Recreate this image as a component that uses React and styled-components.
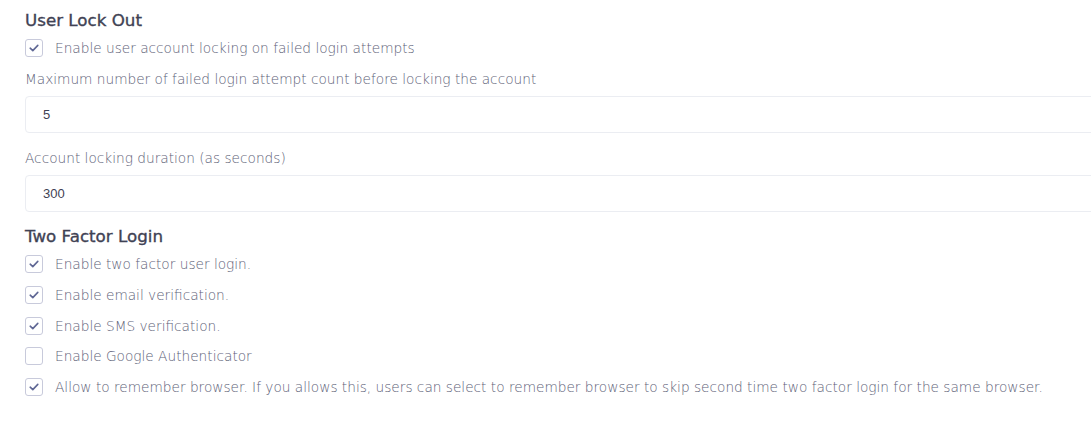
import styled, { createGlobalStyle } from "styled-components";

const GlobalStyle = createGlobalStyle`
  html, body {
    margin: 0;
    padding: 0;
    background: #ffffff;
    overflow: hidden;
  }
  body {
    font-family: "DejaVu Sans", "Noto Sans", sans-serif;
  }
`;

const lockOut = [
  { label: "Enable user account locking on failed login attempts", checked: true },
];

const twoFactor = [
  { label: "Enable two factor user login.", checked: true },
  { label: "Enable email verification.", checked: true },
  { label: "Enable SMS verification.", checked: true },
  { label: "Enable Google Authenticator", checked: false },
  {
    label:
      "Allow to remember browser. If you allows this, users can select to remember browser to skip second time two factor login for the same browser.",
    checked: true,
  },
];

function CheckMark() {
  return (
    <svg width="10" height="8" viewBox="0 0 10 8">
      <path d="M1.2 4.2 L3.8 6.6 L8.8 1.4" fill="none" stroke="#5f6794" strokeWidth="1.6" strokeLinecap="round" strokeLinejoin="round" />
    </svg>
  );
}

function Check({ label, checked }) {
  return (
    <CheckRow>
      <Box>{checked && <CheckMark />}</Box>
      <CheckLabel>{label}</CheckLabel>
    </CheckRow>
  );
}

function App() {
  return (
    <>
      <GlobalStyle />
      <Form>
        <Title>User Lock Out</Title>
        <CheckList>
          {lockOut.map((c) => (
            <Check key={c.label} {...c} />
          ))}
        </CheckList>
        <Field $top={12}>
          <FieldLabel>Maximum number of failed login attempt count before locking the account</FieldLabel>
          <Input defaultValue="5" />
        </Field>
        <Field $top={15}>
          <FieldLabel>Account locking duration (as seconds)</FieldLabel>
          <Input defaultValue="300" />
        </Field>
        <Title $top={12}>Two Factor Login</Title>
        <CheckList>
          {twoFactor.map((c) => (
            <Check key={c.label} {...c} />
          ))}
        </CheckList>
      </Form>
    </>
  );
}

const Form = styled.div`
  display: flex;
  flex-direction: column;
  padding: 8px 0 0 25px;
  width: 1100px;
`;

const Title = styled.h3`
  margin: ${(p) => p.$top || 0}px 0 6px 0;
  font-size: 16.7px;
  font-weight: 400;
  line-height: 24px;
  color: #3f4254;
  -webkit-text-stroke: 0.35px #3f4254;
`;

const CheckList = styled.div`
  display: flex;
  flex-direction: column;
  gap: 12.75px;
  padding-top: 1px;
`;

const CheckRow = styled.label`
  display: flex;
  align-items: center;
  gap: 12px;
  height: 18px;
`;

const Box = styled.span`
  box-sizing: border-box;
  width: 18px;
  height: 18px;
  flex: none;
  border: 1px solid #c8cadb;
  border-radius: 3px;
  display: flex;
  align-items: center;
  justify-content: center;
`;

const CheckLabel = styled.span`
  font-size: 13.7px;
  font-weight: 300;
  color: #5e6278;
  white-space: nowrap;
`;

const Field = styled.div`
  display: flex;
  flex-direction: column;
  gap: 7px;
  margin-top: ${(p) => p.$top}px;
`;

const FieldLabel = styled.span`
  font-size: 13.7px;
  font-weight: 300;
  line-height: 20px;
  color: #5e6278;
`;

const Input = styled.input`
  box-sizing: border-box;
  height: 37px;
  width: 100%;
  border: 1px solid #ebedf2;
  border-radius: 4px;
  padding: 0 17px;
  font-family: "Liberation Sans", Arial, sans-serif;
  font-size: 13px;
  color: #3f4254;
  outline: none;
`;

export default App;
